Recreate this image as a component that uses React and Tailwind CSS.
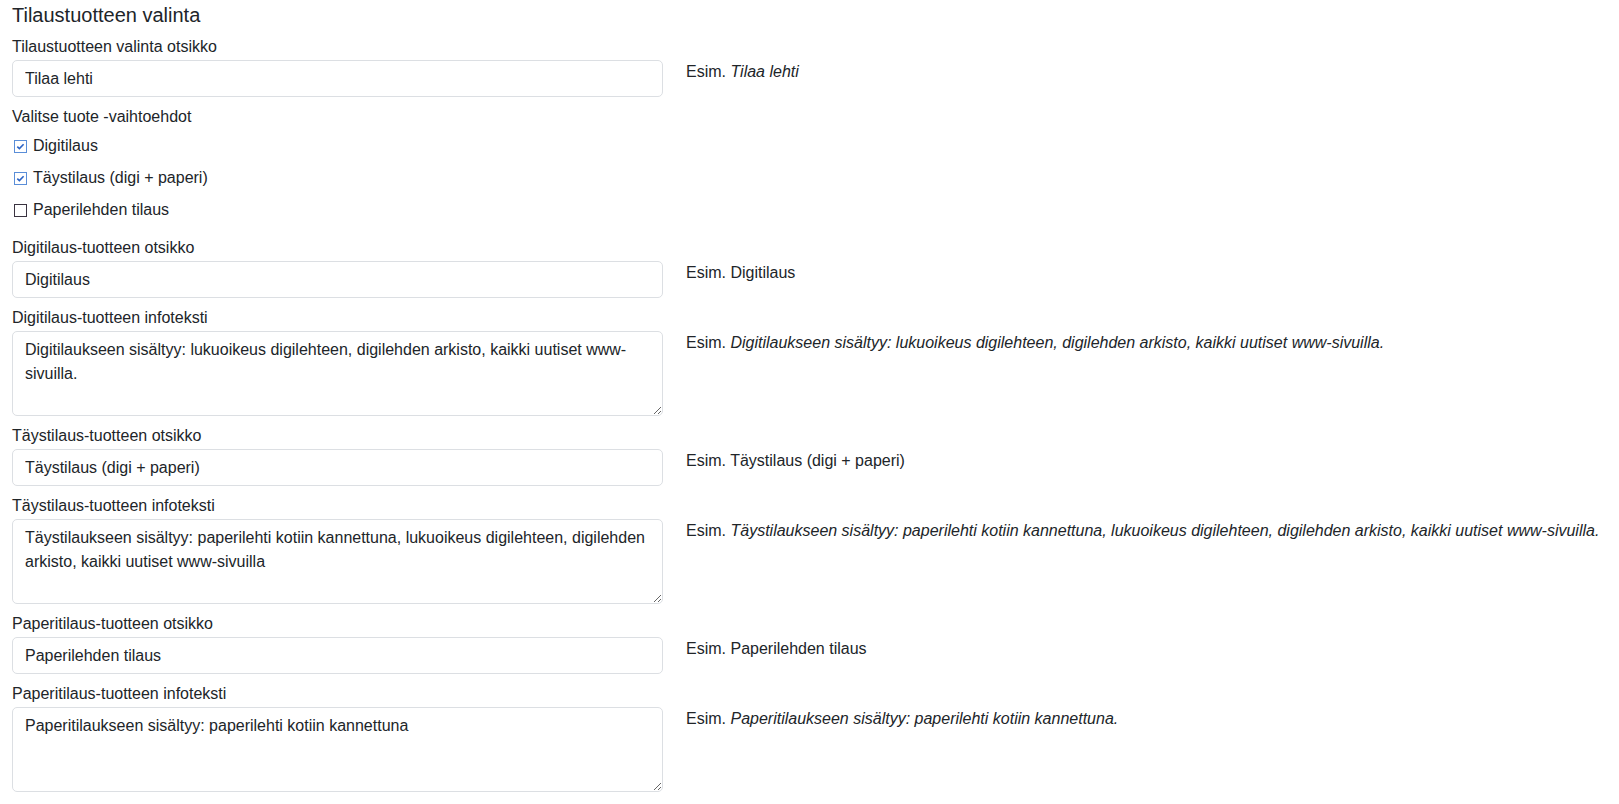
import { useState } from 'react';

const fields = [
  {
    label: 'Digitilaus-tuotteen otsikko',
    value: 'Digitilaus',
    example: 'Digitilaus',
    italic: false,
  },
  {
    label: 'Digitilaus-tuotteen infoteksti',
    value: 'Digitilaukseen sisältyy: lukuoikeus digilehteen, digilehden arkisto, kaikki uutiset www-sivuilla.',
    example: 'Digitilaukseen sisältyy: lukuoikeus digilehteen, digilehden arkisto, kaikki uutiset www-sivuilla.',
    italic: true,
    multiline: true,
  },
  {
    label: 'Täystilaus-tuotteen otsikko',
    value: 'Täystilaus (digi + paperi)',
    example: 'Täystilaus (digi + paperi)',
    italic: false,
  },
  {
    label: 'Täystilaus-tuotteen infoteksti',
    value: 'Täystilaukseen sisältyy: paperilehti kotiin kannettuna, lukuoikeus digilehteen, digilehden arkisto, kaikki uutiset www-sivuilla',
    example: 'Täystilaukseen sisältyy: paperilehti kotiin kannettuna, lukuoikeus digilehteen, digilehden arkisto, kaikki uutiset www-sivuilla.',
    italic: true,
    multiline: true,
  },
  {
    label: 'Paperitilaus-tuotteen otsikko',
    value: 'Paperilehden tilaus',
    example: 'Paperilehden tilaus',
    italic: false,
  },
  {
    label: 'Paperitilaus-tuotteen infoteksti',
    value: 'Paperitilaukseen sisältyy: paperilehti kotiin kannettuna',
    example: 'Paperitilaukseen sisältyy: paperilehti kotiin kannettuna.',
    italic: true,
    multiline: true,
  },
];

const products = [
  { id: 'digi', label: 'Digitilaus', checked: true },
  { id: 'full', label: 'Täystilaus (digi + paperi)', checked: true },
  { id: 'paper', label: 'Paperilehden tilaus', checked: false },
];

function Example({ text, italic }) {
  return (
    <p className="ml-[23px] leading-6 whitespace-nowrap">
      Esim. {italic ? <em className="italic">{text}</em> : text}
    </p>
  );
}

function Field({ label, value, example, italic, multiline }) {
  const control = multiline
    ? 'h-[85px] py-1.5 resize-y'
    : 'h-[37px]';
  const Tag = multiline ? 'textarea' : 'input';

  return (
    <div className="flex flex-col">
      <label className="leading-6 mb-[1px]">{label}</label>
      <div className="flex items-start">
        <Tag
          defaultValue={value}
          className={`w-[651px] shrink-0 rounded-[5px] border border-[#dcdfe3] bg-white px-3 leading-6 text-[#212529] outline-none ${control}`}
        />
        <Example text={example} italic={italic} />
      </div>
    </div>
  );
}

function Checkbox({ label, checked }) {
  const [on, setOn] = useState(checked);

  return (
    <label className="flex items-center h-6 cursor-pointer" onClick={() => setOn((v) => !v)}>
      <span
        className={`ml-[2px] flex h-[13px] w-[13px] items-center justify-center border bg-white ${
          on ? 'border-[#5a8ed8]' : 'border-[#3a3340]'
        }`}
      >
        {on && (
          <svg viewBox="0 0 11 11" className="h-[11px] w-[11px]">
            <path d="M2.3 5.6 L4.4 7.6 L8.6 3.2" fill="none" stroke="#2c64c6" strokeWidth="1.6" />
          </svg>
        )}
      </span>
      <span className="ml-[6px] leading-6">{label}</span>
    </label>
  );
}

export default function App() {
  return (
    <div className="min-h-screen bg-white px-3 pt-[3px] font-['Liberation_Sans',Arial,sans-serif] text-[16px] text-[#212529]">
      <h4 className="text-[20px] leading-6">Tilaustuotteen valinta</h4>

      <div className="mt-2 flex flex-col gap-2">
        <div className="flex flex-col">
          <label className="leading-6 mb-[1px]">Tilaustuotteen valinta otsikko</label>
          <div className="flex items-start">
            <input
              defaultValue="Tilaa lehti"
              className="h-[37px] w-[651px] shrink-0 rounded-[5px] border border-[#dcdfe3] bg-white px-3 leading-6 text-[#212529] outline-none"
            />
            <Example text="Tilaa lehti" italic />
          </div>
        </div>

        <div className="flex flex-col mb-[6px]">
          <span className="leading-6">Valitse tuote -vaihtoehdot</span>
          <div className="mt-[5px] flex flex-col gap-2">
            {products.map((p) => (
              <Checkbox key={p.id} label={p.label} checked={p.checked} />
            ))}
          </div>
        </div>

        {fields.map((f) => (
          <Field key={f.label} {...f} />
        ))}
      </div>
    </div>
  );
}
